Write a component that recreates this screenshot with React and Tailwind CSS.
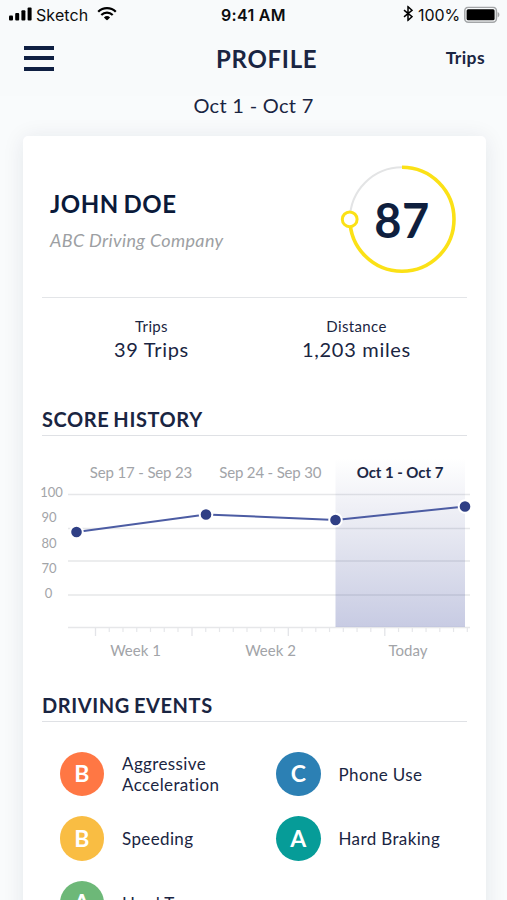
const STATS = [
  { label: 'Trips', value: '39 Trips' },
  { label: 'Distance', value: '1,203 miles' },
]

const EVENTS = [
  { grade: 'B', label: 'Aggressive Acceleration', color: 'bg-[#ff7744]' },
  { grade: 'C', label: 'Phone Use', color: 'bg-[#2c80b4]' },
  { grade: 'B', label: 'Speeding', color: 'bg-[#f9bd43]' },
  { grade: 'A', label: 'Hard Braking', color: 'bg-[#069c98]' },
  { grade: 'A', label: 'Hard Turns', color: 'bg-[#6db878]' },
]

// chart coordinates are relative to the chart's own 425x254 box
const GRID_Y = [58.5, 92.5, 125, 159, 191.5]
const Y_LABELS = [
  { text: '100', x: 9.5, y: 61 },
  { text: '90', x: 7, y: 86 },
  { text: '80', x: 7, y: 111.5 },
  { text: '70', x: 7, y: 136.5 },
  { text: '0', x: 6.5, y: 162 },
]
const POINTS = [
  [34.5, 96],
  [164, 78.5],
  [293.5, 84],
  [423, 70.5],
]
const LONG_TICKS = [53.5, 150, 246.3, 342.8]
const SHORT_TICKS = LONG_TICKS.flatMap((x) => [1, 2, 3, 4, 5, 6].map((i) => x + i * 13.75))

function StatusBar() {
  return (
    <div className="h-[30px] flex items-center pl-[9px] pr-[7px] font-['Inter','Liberation_Sans',sans-serif] text-[#0c0d0e]">
      <svg className="w-[23px] h-[14px] shrink-0 -translate-y-px" viewBox="0 0 23 14">
        <rect x="0" y="8.5" width="4" height="5" rx="1" />
        <rect x="6.2" y="6" width="4" height="7.5" rx="1" />
        <rect x="12.4" y="3.3" width="4" height="10.2" rx="1" />
        <rect x="18.6" y="0.5" width="4" height="13" rx="1" />
      </svg>
      <span className="ml-[4px] w-[53px] text-[16px] leading-5 tracking-[0.1px]">Sketch</span>
      <svg className="ml-[8px] w-[20px] h-[14px] shrink-0 -translate-y-[1.5px]" viewBox="0 0 20 14">
        <path d="M1.2 5.2a12.6 12.6 0 0 1 17.6 0" fill="none" stroke="#000" strokeWidth="2.3" />
        <path d="M4.3 8.5a8.2 8.2 0 0 1 11.4 0" fill="none" stroke="#000" strokeWidth="2.2" />
        <path d="M6.9 10.9a4.5 4.5 0 0 1 6.2 0L10 14z" />
      </svg>
      <span className="ml-[104px] text-[16px] leading-5 font-semibold tracking-[0.3px]">9:41 AM</span>
      <svg className="ml-auto w-[10px] h-[16px] shrink-0 -translate-y-[1.5px]" viewBox="0 0 10 16">
        <path d="M1 4.6l8 6.6-4 3.6V1.2l4 3.6-8 6.6" fill="none" stroke="#000" strokeWidth="1.5" />
      </svg>
      <span className="ml-[5px] w-[42px] text-[16px] leading-5 tracking-[-0.1px]">100%</span>
      <svg className="ml-[4px] w-[36px] h-[17px] shrink-0 -translate-y-[0.5px]" viewBox="0 0 36 17">
        <rect x="0.8" y="0.8" width="31.6" height="15" rx="3.5" fill="none" stroke="#a3a5a7" strokeWidth="1.5" />
        <rect x="2.6" y="2.8" width="28" height="11" rx="1.5" />
        <path d="M33.6 5.6v5.4c2.4-.8 2.4-4.6 0-5.4z" fill="#a3a5a7" />
      </svg>
    </div>
  )
}

function ScoreRing() {
  return (
    <div className="relative w-[118px] h-[110px] flex items-center justify-center">
      <svg className="absolute inset-0" width="118" height="110" viewBox="0 0 118 110">
        <circle cx="62" cy="55.3" r="52" fill="none" stroke="#e3e4e5" strokeWidth="2" />
        <path d="M62 3.3a52 52 0 1 1-52 52" fill="none" stroke="#fbe116" strokeWidth="3.6" />
        <circle cx="9.7" cy="55.3" r="7.4" fill="#fff" stroke="#fbe116" strokeWidth="3" />
      </svg>
      <span className="relative pl-[6px] pt-[3px] text-[47px] leading-none font-bold tracking-[0.5px] text-[#0f1f3e]">87</span>
    </div>
  )
}

function SectionTitle({ children }) {
  return (
    <h2 className="h-[32px] border-b border-[#dfe1e5] text-[20px] leading-[30px] font-bold tracking-[0.6px] [word-spacing:-1.5px]">
      {children}
    </h2>
  )
}

function ScoreChart() {
  return (
    <svg className="block overflow-visible" width="425" height="254" viewBox="0 0 425 254">
      <defs>
        <linearGradient id="week" x1="0" y1="0" x2="0" y2="1">
          <stop offset="0" stopColor="#323f87" stopOpacity="0" />
          <stop offset="1" stopColor="#323f98" stopOpacity="0.27" />
        </linearGradient>
      </defs>
      {GRID_Y.map((y) => (
        <line key={y} x1="26" x2="428" y1={y} y2={y} stroke="#e6e7e9" strokeWidth="1.6" />
      ))}
      {LONG_TICKS.map((x) => (
        <line key={x} x1={x} x2={x} y1="192" y2="200" stroke="#e3e4e8" strokeWidth="1.3" />
      ))}
      {SHORT_TICKS.filter((x) => x < 428).map((x) => (
        <line key={x} x1={x} x2={x} y1="192" y2="196" stroke="#e6e7ea" strokeWidth="1.2" />
      ))}
      <rect x="293.5" y="22" width="129.5" height="169" fill="url(#week)" />
      <polyline points={POINTS.map((p) => p.join(',')).join(' ')} fill="none" stroke="#4c5ca3" strokeWidth="2" />
      {POINTS.map(([x, y]) => (
        <circle key={x} cx={x} cy={y} r="6.3" fill="#2f3f85" stroke="#fff" strokeWidth="2" />
      ))}
      <g fill="#a2a4a8" fontSize="15" textAnchor="middle">
        <text x="99" y="42" letterSpacing="-0.15">Sep 17 - Sep 23</text>
        <text x="228.3" y="42" letterSpacing="-0.17">Sep 24 - Sep 30</text>
        <text x="358" y="42" letterSpacing="-0.05" fontWeight="700" fill="#1c2745">Oct 1 - Oct 7</text>
        <text x="93.5" y="219.7">Week 1</text>
        <text x="228.5" y="219.7">Week 2</text>
        <text x="366" y="219.7">Today</text>
        {Y_LABELS.map((l) => (
          <text key={l.text} x={l.x} y={l.y} fontSize="13">{l.text}</text>
        ))}
      </g>
    </svg>
  )
}

export default function App() {
  return (
    <div className="w-[507px] h-[900px] overflow-hidden bg-[#f9fbfc] font-['Lato',sans-serif] text-[#1a2542]">
      <header className="h-[96px] bg-[#f8fafb]">
        <StatusBar />
        <div className="h-[56px] flex items-center pl-[24px] pr-[22px]">
          <button className="w-[30px] flex flex-col gap-[6.5px]">
            <span className="h-[4px] bg-[#0f1f42]" />
            <span className="h-[4px] bg-[#0f1f42]" />
            <span className="h-[4px] bg-[#0f1f42]" />
          </button>
          <h1 className="ml-[162px] pt-px text-[24px] font-bold tracking-[0.7px]">PROFILE</h1>
          <span className="ml-auto pt-px text-[17.5px] font-bold tracking-[0.4px]">Trips</span>
        </div>
      </header>

      <p className="h-[40px] text-center text-[20px] leading-[19px] tracking-[0.3px]">Oct 1 - Oct 7</p>

      <main className="ml-[23px] w-[463px] h-[800px] px-[19px] rounded-[5px] bg-white shadow-[0_2px_22px_rgba(20,33,63,0.09)]">
        <section className="h-[162px] flex justify-between pl-[8px] pr-[9px] border-b border-[#e3e5e8]">
          <div className="pt-[53px]">
            <p className="text-[24px] leading-[30px] font-bold tracking-[0.5px] [word-spacing:-1.5px] text-[#0a1a3a]">JOHN DOE</p>
            <p className="mt-[9px] text-[18px] leading-[24px] italic tracking-[0.35px] text-[#9d9fa3]">ABC Driving Company</p>
          </div>
          <div className="pt-[28px]">
            <ScoreRing />
          </div>
        </section>

        <section className="h-[106px] pt-[18px] pl-[7px] pr-[8px] grid grid-cols-2 text-center">
          {STATS.map((s) => (
            <div key={s.label}>
              <p className="text-[15px] leading-[20px] tracking-[0.35px]">{s.label}</p>
              <p className="text-[20px] leading-[26px] tracking-[0.7px]">{s.value}</p>
            </div>
          ))}
        </section>

        <SectionTitle>SCORE HISTORY</SectionTitle>
        <ScoreChart />

        <SectionTitle>DRIVING EVENTS</SectionTitle>
        <div className="pt-[29.5px] pl-[17.5px] grid grid-cols-[216.5px_1fr] gap-y-[20px]">
          {EVENTS.map((e) => (
            <div key={e.label} className="h-[44.5px] flex items-center">
              <span className={`${e.color} w-[44.5px] h-[44.5px] shrink-0 rounded-full flex items-center justify-center text-[23px] leading-none font-bold text-white`}>
                {e.grade}
              </span>
              <span className="ml-[18px] w-[110px] pt-px text-[17px] leading-[21px] tracking-[0.37px]">{e.label}</span>
            </div>
          ))}
        </div>
      </main>
    </div>
  )
}
